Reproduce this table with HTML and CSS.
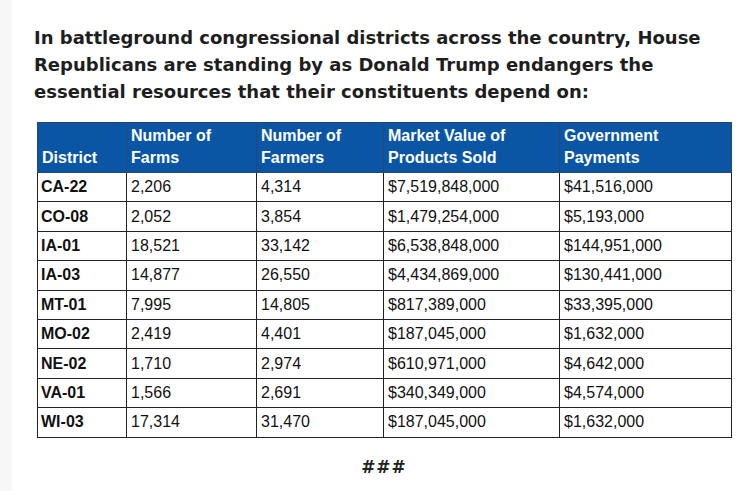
FILE: index.html
```html
<!DOCTYPE html>
<html lang="en">
<head>
<meta charset="utf-8">
<title>Battleground districts</title>
<link rel="stylesheet" href="styles.css">
</head>
<body>
<div class="page">
  <div class="content">
    <p class="lead">In battleground congressional districts across the country, House Republicans are standing by as Donald Trump endangers the essential resources that their constituents depend on:</p>
    <table class="data">
      <colgroup>
        <col class="c1"><col class="c2"><col class="c3"><col class="c4"><col class="c5">
      </colgroup>
      <thead>
        <tr>
          <th>District</th>
          <th>Number of<br>Farms</th>
          <th>Number of<br>Farmers</th>
          <th>Market Value of<br>Products Sold</th>
          <th>Government<br>Payments</th>
        </tr>
      </thead>
      <tbody>
        <tr><td class="d">CA-22</td><td>2,206</td><td>4,314</td><td>$7,519,848,000</td><td>$41,516,000</td></tr>
        <tr><td class="d">CO-08</td><td>2,052</td><td>3,854</td><td>$1,479,254,000</td><td>$5,193,000</td></tr>
        <tr><td class="d">IA-01</td><td>18,521</td><td>33,142</td><td>$6,538,848,000</td><td>$144,951,000</td></tr>
        <tr><td class="d">IA-03</td><td>14,877</td><td>26,550</td><td>$4,434,869,000</td><td>$130,441,000</td></tr>
        <tr><td class="d">MT-01</td><td>7,995</td><td>14,805</td><td>$817,389,000</td><td>$33,395,000</td></tr>
        <tr><td class="d">MO-02</td><td>2,419</td><td>4,401</td><td>$187,045,000</td><td>$1,632,000</td></tr>
        <tr><td class="d">NE-02</td><td>1,710</td><td>2,974</td><td>$610,971,000</td><td>$4,642,000</td></tr>
        <tr><td class="d">VA-01</td><td>1,566</td><td>2,691</td><td>$340,349,000</td><td>$4,574,000</td></tr>
        <tr><td class="d">WI-03</td><td>17,314</td><td>31,470</td><td>$187,045,000</td><td>$1,632,000</td></tr>
      </tbody>
    </table>
    <p class="end">###</p>
  </div>
</div>
</body>
</html>
```
FILE: styles.css
```css
html, body {
  margin: 0;
  padding: 0;
  background: #ffffff;
}
.page {
  border-left: 12px solid #f7f7f7;
  min-height: 491px;
  box-sizing: border-box;
}
.content {
  margin-left: 22px;
  width: 700px;
  padding-top: 24px;
}
.lead {
  margin: 0;
  font-family: "DejaVu Sans", Verdana, sans-serif;
  font-weight: bold;
  font-size: 18px;
  line-height: 27px;
  color: #1e1e1e;
}
.data {
  margin: 17px 0 0 3px;
  width: 694px;
  border-collapse: collapse;
  table-layout: fixed;
  font-family: "Liberation Sans", Arial, sans-serif;
  font-size: 16px;
  line-height: 22px;
  color: #111111;
  border: 1px solid #666666;
}
.c1 { width: 89px; }
.c2 { width: 130px; }
.c3 { width: 127px; }
.c4 { width: 176px; }
.c5 { width: 172px; }
.data th {
  background: #0a56a5;
  color: #ffffff;
  font-weight: bold;
  text-align: left;
  vertical-align: bottom;
  padding: 2px 4px 3px;
  border: 1px solid #28466f;
}
.data td {
  padding: 3px 4px 3px;
  border: 1px solid #222222;
  vertical-align: middle;
}
.data tbody tr {
  height: 29.4px;
}
.data td.d {
  font-weight: bold;
  padding-left: 3px;
}
.end {
  margin: 18px 0 0;
  text-align: center;
  font-family: "DejaVu Sans", Verdana, sans-serif;
  font-weight: bold;
  font-size: 17px;
  line-height: 22px;
  color: #222222;
  letter-spacing: 1px;
}
```
